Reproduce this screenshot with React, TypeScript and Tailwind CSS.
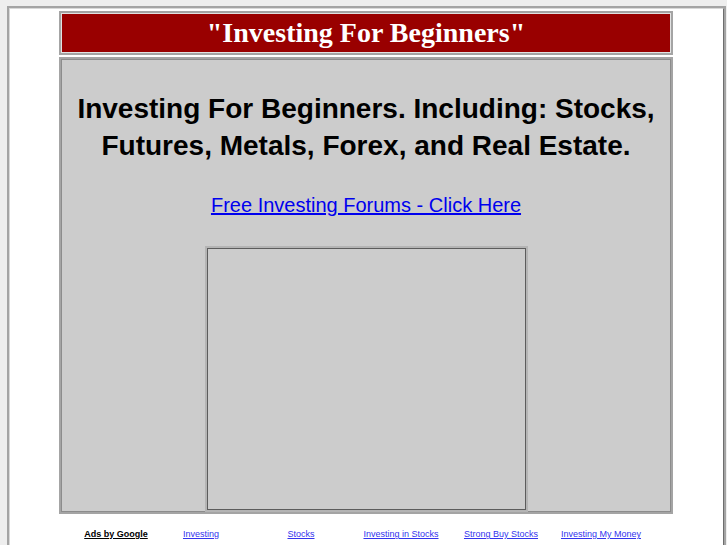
const FOOTER_LINKS = [
  { label: "Investing" },
  { label: "Stocks" },
  { label: "Investing in Stocks" },
  { label: "Strong Buy Stocks" },
  { label: "Investing My Money" },
];

export default function App() {
  return (
    <div className="h-[545px] overflow-hidden bg-[#eeeeee] pt-[6px] pl-[7px] pr-[1px] font-['Liberation_Sans',Arial,sans-serif]">
      {/* Outer page table */}
      <div className="h-[560px] border-2 border-[#a4a4a4] bg-white">
        <div className="h-full border border-[#d8d8d8] border-r-[#6e6e6e]">
          <div className="ml-[49px] w-[614px] pt-[2px]">
            {/* Title bar */}
            <div className="border-2 border-[#a4a4a4]">
              <div className="flex h-[40px] items-center justify-center border border-[#e2e2e2] bg-[#990000]">
                <h1 className="font-['Liberation_Serif','Times_New_Roman',serif] text-[28px] font-bold leading-none text-white">
                  "Investing For Beginners"
                </h1>
              </div>
            </div>

            {/* Main panel */}
            <div className="mt-[2px] border-2 border-[#a4a4a4]">
              <div className="flex h-[453px] flex-col items-center border border-[#8c8c8c] bg-[#cccccc]">
                <h2 className="mt-[30px] text-center text-[28px] font-bold leading-[37px] text-black">
                  Investing For Beginners. Including: Stocks,
                  <br />
                  Futures, Metals, Forex, and Real Estate.
                </h2>
                <a
                  href="#"
                  className="mt-[29px] text-[20px] leading-[24px] text-[#0000ee] underline"
                >
                  Free Investing Forums - Click Here
                </a>
                <div className="mt-[29px] border-2 border-[#b4b4b4]">
                  <div className="h-[262px] w-[319px] border border-[#5c5c5c] bg-[#cccccc]" />
                </div>
              </div>
            </div>

            {/* Ads row */}
            <div className="flex pt-[14px] text-[9px] leading-[12px]">
              <div className="w-[92px] pl-[22px] text-center">
                <a href="#" className="font-bold text-black underline">
                  Ads by Google
                </a>
              </div>
              {FOOTER_LINKS.map((link) => (
                <div key={link.label} className="w-[100px] text-center">
                  <a href="#" className="text-[#3333ee] underline">
                    {link.label}
                  </a>
                </div>
              ))}
            </div>
          </div>
        </div>
      </div>
    </div>
  );
}
